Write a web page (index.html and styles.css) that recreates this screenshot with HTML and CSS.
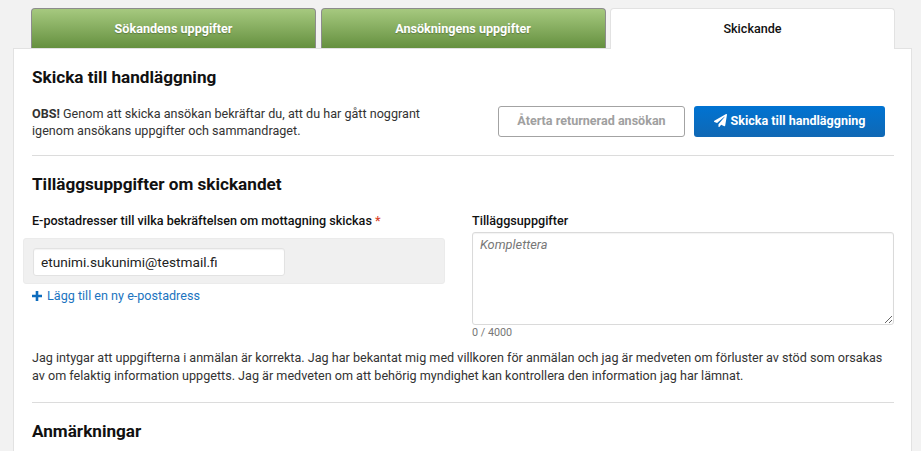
FILE: index.html
```html
<!DOCTYPE html>
<html lang="sv">
<head>
<meta charset="utf-8">
<title>Skickande</title>
<link rel="stylesheet" href="styles.css">
</head>
<body>
<div class="page">
  <nav class="tabs">
    <a class="tab">Sökandens uppgifter</a>
    <a class="tab">Ansökningens uppgifter</a>
    <a class="tab active">Skickande</a>
  </nav>
  <main class="panel">
    <h2 class="title-first">Skicka till handläggning</h2>
    <div class="submit-row">
      <p class="notice"><strong>OBS!</strong> Genom att skicka ansökan bekräftar du, att du har gått noggrant igenom ansökans uppgifter och sammandraget.</p>
      <div class="actions">
        <button class="btn btn-outline" type="button">Återta returnerad ansökan</button>
        <button class="btn btn-primary" type="button">
          <svg class="plane" viewBox="0 0 512 512" aria-hidden="true"><path fill="currentColor" d="M476 3.2 12.5 270.6c-18.100 10.400-15.800 35.600 2.200 43.200L121 358.400l287.300-253.200c5.500-4.900 13.300 2.600 8.600 8.300L176 407v80.500c0 23.600 28.500 32.900 42.500 15.800L282 426l124.600 52.200c14.200 6 30.400-2.900 33-18.200l72-432C515 7.800 493.300-6.800 476 3.200z"/></svg>
          Skicka till handläggning
        </button>
      </div>
    </div>
    <hr class="rule">
    <h2 class="title-second">Tilläggsuppgifter om skickandet</h2>
    <div class="form-grid">
      <div class="col-email">
        <label class="label">E-postadresser till vilka bekräftelsen om mottagning skickas <span class="req">*</span></label>
        <div class="email-box">
          <input class="input" type="text" value="etunimi.sukunimi@testmail.fi">
        </div>
        <a class="add-link">
          <svg class="plus" viewBox="0 0 10 10" aria-hidden="true"><path fill="currentColor" d="M3.700 0h2.600v3.700H10v2.600H6.300V10H3.700V6.300H0V3.700h3.700z"/></svg>
          Lägg till en ny e-postadress
        </a>
      </div>
      <div class="col-extra">
        <label class="label">Tilläggsuppgifter</label>
        <textarea class="textarea" placeholder="Komplettera"></textarea>
        <div class="counter">0 / 4000</div>
      </div>
    </div>
    <p class="declaration">Jag intygar att uppgifterna i anmälan är korrekta. Jag har bekantat mig med villkoren för anmälan och jag är medveten om förluster av stöd som orsakas av om felaktig information uppgetts. Jag är medveten om att behörig myndighet kan kontrollera den information jag har lämnat.</p>
    <hr class="rule rule-lower">
    <h2 class="title-third">Anmärkningar</h2>
  </main>
</div>
</body>
</html>
```
FILE: styles.css
```css
* { box-sizing: border-box; }
html, body { margin: 0; height: 100%; overflow: hidden; }
body {
  background: #f2f2f2;
  font-family: Roboto, "Liberation Sans", sans-serif;
  font-size: 12.6px;
  line-height: 18px;
  color: #333;
}
.page { width: 899px; margin-left: 13px; padding-top: 8px; height: 451px; overflow: hidden; }
.tabs { display: flex; margin-left: 18px; width: 864px; justify-content: space-between; height: 40px; }
.tab {
  width: 285px;
  height: 40px;
  display: flex;
  align-items: center;
  justify-content: center;
  border: 1px solid #8c8c8c;
  border-bottom: 0;
  border-radius: 4px 4px 0 0;
  background: linear-gradient(#a6c97f, #65903f);
  color: #fff;
  font-weight: 700;
  font-size: 12.6px;
  text-shadow: 0 1px 1px rgba(0,0,0,.25);
}
.tab.active {
  background: #fff;
  color: #111;
  font-weight: 500;
  text-shadow: none;
  border: 1px solid #e2e2e2;
  border-bottom: 0;
  position: relative;
  z-index: 1;
  height: 41px;
}
.panel {
  background: #fff;
  border: 1px solid #e2e2e2;
  padding: 0 17px 0 18px;
  height: 500px;
}
h2 { margin: 0; color: #111; font-size: 17.15px; font-weight: 700; line-height: 20px; }
.title-first { padding-top: 18px; }
.submit-row { display: flex; justify-content: space-between; margin-top: 19px; }
.notice { margin: -1px 0 0; width: 410px; line-height: 17px; }
.notice strong { font-weight: 700; }
.actions { display: flex; gap: 9px; margin-right: 9px; }
.btn {
  height: 31px;
  width: 187px;
  border-radius: 3px;
  font-family: inherit;
  font-size: 12.55px;
  font-weight: 700;
  padding: 0 0 2px;
  display: flex;
  align-items: center;
  justify-content: center;
}
.btn-outline { background: #fff; border: 1px solid #a3a3a3; color: #a0a0a0; }
.btn-primary {
  width: 191px;
  border: 0;
  color: #fff;
  background: linear-gradient(#0073d2, #1068b4);
  gap: 4px;
}
.plane { width: 13px; height: 13px; }
.rule { border: 0; border-top: 1px solid #dcdcdc; margin: 16px 0 0; }
.title-second { margin-top: 18px; }
.form-grid { display: flex; margin-top: 18px; }
.col-email { width: 440px; }
.label { display: block; color: #111; font-weight: 500; font-size: 12.6px; line-height: 18px; }
.req { color: #d9442e; }
.email-box {
  margin: 8px 0 0 -9px;
  width: 422px;
  height: 46px;
  background: #f0f0f0;
  border-radius: 3px;
  border: 1px solid #ebebeb;
  padding: 9px;
}
.input {
  display: block;
  width: 252px;
  height: 28px;
  border: 1px solid #e2e2e2;
  border-radius: 3px;
  box-shadow: inset 0 1px 1px rgba(0,0,0,.05);
  background: #fff;
  padding: 0 7px;
  font-family: inherit;
  font-size: 13.65px;
  color: #222;
  outline: none;
}
.add-link {
  display: flex;
  align-items: center;
  gap: 5px;
  margin-top: 3px;
  color: #1b74c0;
  line-height: 18px;
}
.plus { width: 10px; height: 10px; color: #0d6cbd; }
.col-extra { width: 422px; }
.textarea {
  display: block;
  width: 422px;
  height: 93px;
  margin-top: 2px;
  border: 1px solid #dadada;
  border-radius: 3px;
  box-shadow: inset 0 1px 1px rgba(0,0,0,.05);
  padding: 3px 7px;
  font-family: inherit;
  font-size: 12.8px;
  line-height: 18px;
  outline: none;
}
.textarea::placeholder { color: #777; font-style: italic; opacity: 1; }
.counter { color: #777; font-size: 10.8px; line-height: 14px; margin-top: 1px; }
.declaration { margin: 9px 0 0; }
.rule-lower { margin-top: 17px; }
.title-third { margin-top: 18px; }
```
